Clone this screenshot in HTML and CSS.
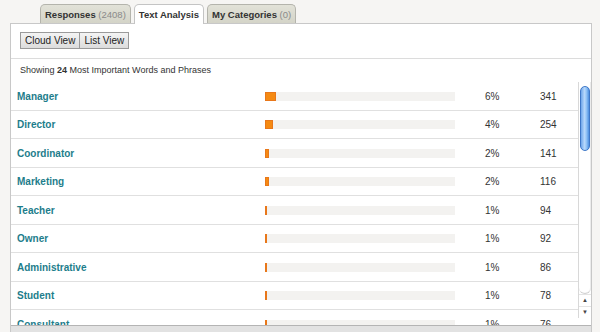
FILE: index.html
```html
<!DOCTYPE html>
<html lang="en">
<head>
  <meta charset="UTF-8">
  <title>Text Analysis</title>
  <link rel="stylesheet" href="styles.css">
</head>
<body>

<div class="tabs">
  <div class="tab"><b>Responses</b> <span class="count">(2408)</span></div>
  <div class="tab active"><b>Text Analysis</b></div>
  <div class="tab"><b>My Categories</b> <span class="count">(0)</span></div>
</div>

<div class="panel">
  <!-- View switcher -->
  <div class="toolbar">
    <button class="view-btn">Cloud View</button><button class="view-btn">List View</button>
  </div>

  <div class="summary">Showing <b>24</b> Most Important Words and Phrases</div>

  <!-- Word list -->
  <div class="list-wrap">
    <div class="word-list">
      <div class="word-row"><a class="word">Manager</a><div class="track"><div class="fill" style="width: 11px;"></div></div><span class="pct">6%</span><span class="num">341</span></div>
      <div class="word-row"><a class="word">Director</a><div class="track"><div class="fill" style="width: 8px;"></div></div><span class="pct">4%</span><span class="num">254</span></div>
      <div class="word-row"><a class="word">Coordinator</a><div class="track"><div class="fill" style="width: 4px;"></div></div><span class="pct">2%</span><span class="num">141</span></div>
      <div class="word-row"><a class="word">Marketing</a><div class="track"><div class="fill" style="width: 4px;"></div></div><span class="pct">2%</span><span class="num">116</span></div>
      <div class="word-row"><a class="word">Teacher</a><div class="track"><div class="fill" style="width: 2px;"></div></div><span class="pct">1%</span><span class="num">94</span></div>
      <div class="word-row"><a class="word">Owner</a><div class="track"><div class="fill" style="width: 2px;"></div></div><span class="pct">1%</span><span class="num">92</span></div>
      <div class="word-row"><a class="word">Administrative</a><div class="track"><div class="fill" style="width: 2px;"></div></div><span class="pct">1%</span><span class="num">86</span></div>
      <div class="word-row"><a class="word">Student</a><div class="track"><div class="fill" style="width: 2px;"></div></div><span class="pct">1%</span><span class="num">78</span></div>
      <div class="word-row"><a class="word">Consultant</a><div class="track"><div class="fill" style="width: 2px;"></div></div><span class="pct">1%</span><span class="num">76</span></div>
    </div>

    <div class="scrollbar">
      <div class="scroll-track"><div class="thumb"></div></div>
      <div class="arrow">&#9650;</div>
      <div class="arrow">&#9660;</div>
    </div>
  </div>

  <div class="footer-bar"></div>
</div>

</body>
</html>
```

FILE: styles.css
```css
body {
  font-family: "Liberation Sans", Arial, sans-serif;
  background-color: #f6f5f3;
  margin: 0;
  padding: 0;
  color: #333;
}

.tabs {
  display: flex;
  align-items: flex-end;
  gap: 3px;
  padding: 4px 0 0 40px;
  height: 19px;
}

.tab {
  height: 18px;
  line-height: 19px;
  padding: 0 4px;
  font-size: 9.5px;
  color: #333;
  background: linear-gradient(#e2e2d8, #d4d4c8);
  border: 1px solid #b4b4ac;
  border-bottom: none;
  border-radius: 5px 5px 0 0;
}

.tab .count {
  color: #8a8a8a;
}

.tab.active {
  background: #fff;
  border-color: #c4c4c4;
  height: 19px;
  margin-bottom: -1px;
  position: relative;
  z-index: 1;
}

.panel {
  margin-left: 10px;
  width: 580px;
  background-color: #fff;
  border: 1px solid #c8c8c8;
  border-bottom: none;
}

.toolbar {
  padding: 8px 9px 0 9px;
  height: 26px;
  border-bottom: 1px solid #dcdcdc;
  display: flex;
  align-items: flex-start;
}

.view-btn {
  font-family: inherit;
  font-size: 10px;
  color: #222;
  height: 17px;
  padding: 0 4px;
  margin: 0;
  background: linear-gradient(#f4f4f4, #dcdcdc);
  border: 1px solid #9a9a9a;
  border-radius: 0;
}

.view-btn + .view-btn {
  border-left: none;
}

.summary {
  font-size: 9px;
  line-height: 23px;
  height: 23px;
  padding-left: 9px;
  color: #333;
}

.list-wrap {
  display: flex;
  height: 243px;
  overflow: hidden;
}

.word-list {
  flex: 1;
}

.word-row {
  display: grid;
  grid-template-columns: 248px 190px 30px 55px 1fr;
  align-items: center;
  box-sizing: border-box;
  height: 28.5px;
  border-bottom: 1px solid #e0e0e0;
  padding: 1px 0 0 6px;
  font-size: 10px;
}

.word {
  color: #1d7d8b;
  font-weight: bold;
  font-size: 10px;
}

.track {
  height: 9px;
  background-color: #f3f2f0;
}

.fill {
  height: 9px;
  background-color: #f58a12;
  box-sizing: border-box;
  border: 1px solid #e8771a;
}

.pct {
  grid-column: 4;
}

.num {
  grid-column: 5;
}

.scrollbar {
  width: 12px;
  border-left: 1px solid #d8d8d8;
  display: flex;
  flex-direction: column;
  height: 236px;
}

.scroll-track {
  flex: 1;
  padding: 4px 1px 0 1px;
  border-bottom: 1px solid #d0d0d0;
  border-radius: 0 0 6px 6px;
  box-shadow: inset -1px 0 #ececec;
}

.thumb {
  height: 63px;
  border-radius: 6px;
  border: 1px solid #3f78c8;
  background: linear-gradient(90deg, #6fa6ea, #b9d9fb 45%, #8ec0f5 70%, #4d8fe0);
}

.arrow {
  height: 11px;
  font-size: 6px;
  line-height: 11px;
  text-align: center;
  color: #444;
  border-top: 1px solid #e4e4e4;
}

.footer-bar {
  height: 7px;
  background-color: #e2e2e2;
  border-top: 1px solid #b4b4b4;
}
```
